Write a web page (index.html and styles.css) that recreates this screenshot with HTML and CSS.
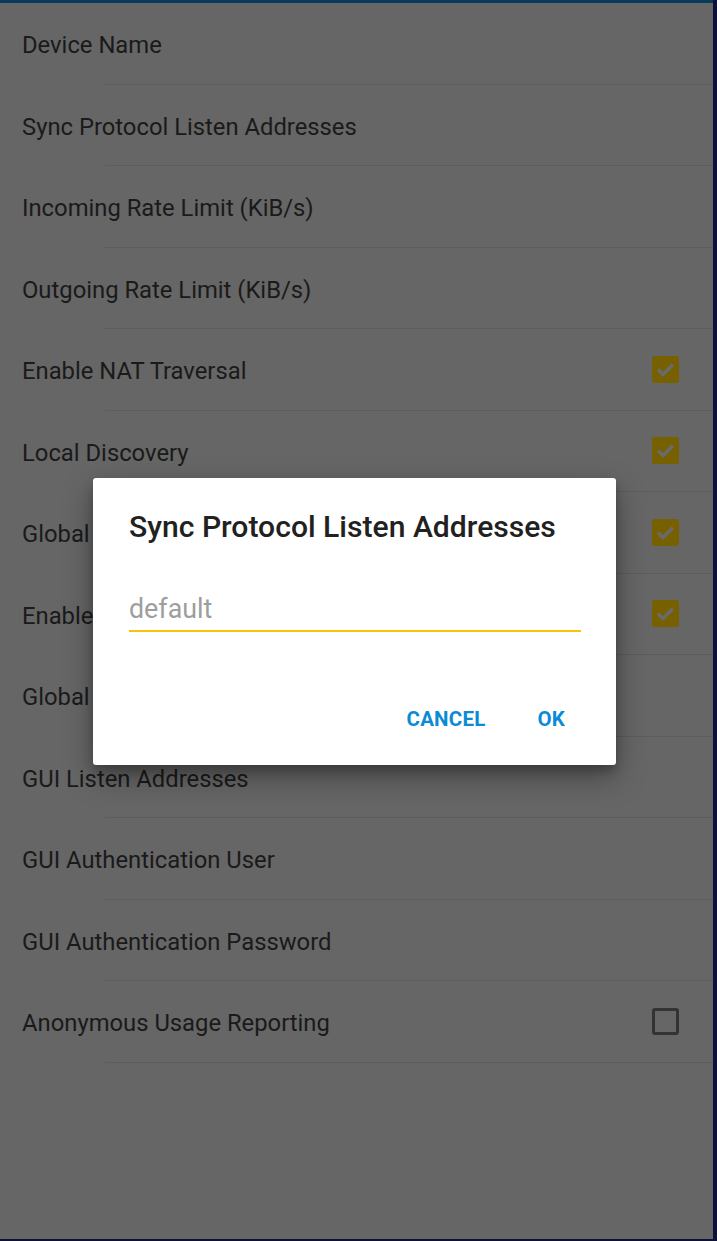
FILE: index.html
```html
<!DOCTYPE html>
<html lang="en">
<head>
<meta charset="utf-8">
<title>Settings</title>
<link rel="stylesheet" href="styles.css">
</head>
<body>
<div class="screen">
  <div class="app">
    <div class="topbar"></div>
    <ul class="prefs">
      <li class="pref"><span class="pref-title">Device Name</span></li>
      <li class="pref"><span class="pref-title">Sync Protocol Listen Addresses</span></li>
      <li class="pref"><span class="pref-title">Incoming Rate Limit (KiB/s)</span></li>
      <li class="pref"><span class="pref-title">Outgoing Rate Limit (KiB/s)</span></li>
      <li class="pref"><span class="pref-title">Enable NAT Traversal</span><span class="check on"><svg viewBox="0 0 27 27"><path d="M6 13.5 L11 18.5 L21 8.5" /></svg></span></li>
      <li class="pref"><span class="pref-title">Local Discovery</span><span class="check on"><svg viewBox="0 0 27 27"><path d="M6 13.5 L11 18.5 L21 8.5" /></svg></span></li>
      <li class="pref"><span class="pref-title">Global Discovery</span><span class="check on"><svg viewBox="0 0 27 27"><path d="M6 13.5 L11 18.5 L21 8.5" /></svg></span></li>
      <li class="pref"><span class="pref-title">Enable Relaying</span><span class="check on"><svg viewBox="0 0 27 27"><path d="M6 13.5 L11 18.5 L21 8.5" /></svg></span></li>
      <li class="pref"><span class="pref-title">Global Announce Servers</span></li>
      <li class="pref"><span class="pref-title">GUI Listen Addresses</span></li>
      <li class="pref"><span class="pref-title">GUI Authentication User</span></li>
      <li class="pref"><span class="pref-title">GUI Authentication Password</span></li>
      <li class="pref"><span class="pref-title">Anonymous Usage Reporting</span><span class="check off"></span></li>
    </ul>

    <div class="dialog">
      <h2 class="dialog-title">Sync Protocol Listen Addresses</h2>
      <div class="field"><span class="hint">default</span></div>
      <div class="actions">
        <button class="btn">CANCEL</button>
        <button class="btn">OK</button>
      </div>
    </div>
  </div>
  <div class="edge-right"></div>
  <div class="edge-bottom"></div>
</div>
</body>
</html>
```

FILE: styles.css
```css
html, body {
  margin: 0;
  padding: 0;
  background: #0e1238;
}

.screen {
  width: 717px;
  height: 1241px;
  display: grid;
  grid-template-columns: 713px 4px;
  grid-template-rows: 1239px 2px;
  font-family: Roboto, "Liberation Sans", sans-serif;
}

.app {
  position: relative;
  background: #666666;
  overflow: hidden;
  display: flex;
  flex-direction: column;
}

.edge-right,
.edge-bottom {
  background: #0e1238;
}

.edge-bottom {
  grid-column: 1 / 3;
}

.topbar {
  height: 3px;
  background: #063b5c;
  flex: none;
}

.prefs {
  list-style: none;
  margin: 0;
  padding: 0;
}

.pref {
  height: 81.5px;
  box-sizing: border-box;
  display: flex;
  align-items: center;
  justify-content: space-between;
  padding: 3px 34px 0 22px;
  background: linear-gradient(#5c5c5c, #5c5c5c) no-repeat 105px 100% / calc(100% - 105px) 1px;
}

.pref-title {
  font-size: 23.8px;
  color: #1a1a1a;
  line-height: 28px;
}

.check {
  width: 27px;
  height: 27px;
  margin-top: -4px;
  box-sizing: border-box;
  border-radius: 3px;
  display: block;
}

.check.on {
  background: #776000;
}

.check.on svg {
  display: block;
  width: 27px;
  height: 27px;
}

.check.on path {
  fill: none;
  stroke: #6a6a6a;
  stroke-width: 3.6;
}

.check.off {
  border: 3.5px solid #333333;
}

.dialog {
  position: absolute;
  left: 93px;
  top: 478px;
  width: 523px;
  height: 287px;
  box-sizing: border-box;
  background: #ffffff;
  border-radius: 3px;
  box-shadow: 0 12px 30px rgba(0, 0, 0, 0.35), 0 6px 10px rgba(0, 0, 0, 0.2);
  padding: 31px 35px 0 36px;
  display: flex;
  flex-direction: column;
}

.dialog-title {
  margin: 0;
  font-size: 30.1px;
  font-weight: 500;
  color: #212121;
  line-height: 36px;
}

.field {
  margin-top: 48px;
  height: 37px;
  border-bottom: 2px solid #ffc107;
  display: flex;
  align-items: flex-start;
}

.hint {
  font-size: 26.8px;
  color: #9e9e9e;
  line-height: 32px;
}

.actions {
  margin: 63px -9px 0 0;
  display: flex;
  justify-content: flex-end;
  gap: 2px;
}

.btn {
  font-family: inherit;
  background: none;
  border: 0;
  padding: 0 25px;
  height: 48px;
  font-size: 20.5px;
  font-weight: 700;
  color: #0b8ad5;
  letter-spacing: 0.2px;
}
```
